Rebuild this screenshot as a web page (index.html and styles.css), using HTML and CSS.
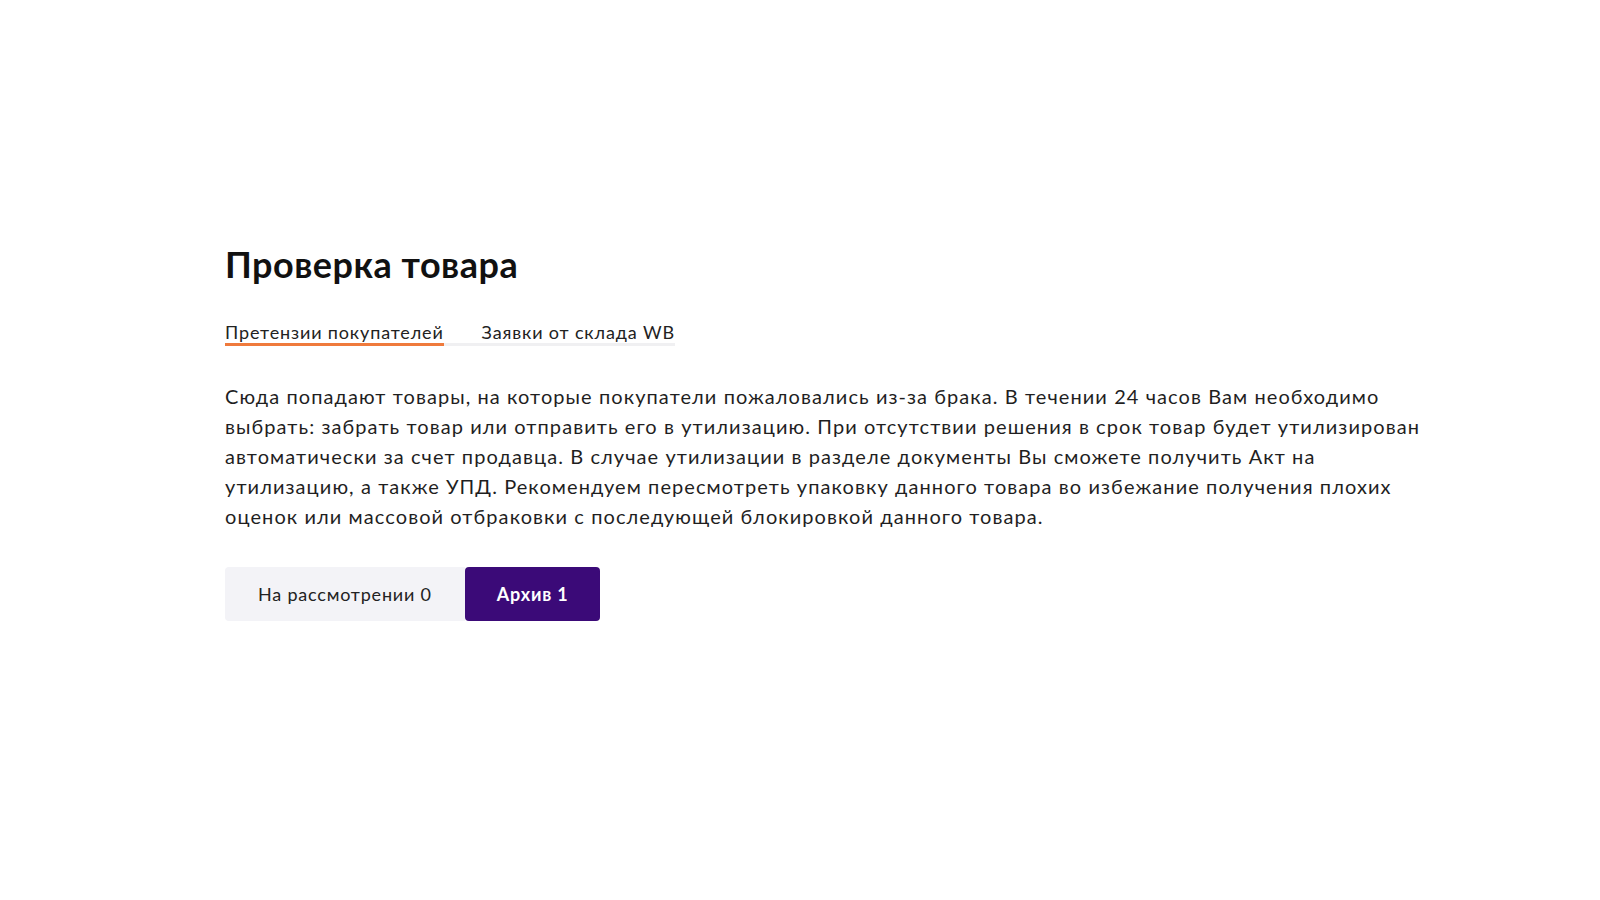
FILE: index.html
```html
<!DOCTYPE html>
<html lang="ru">
<head>
    <meta charset="UTF-8">
    <meta name="viewport" content="width=device-width, initial-scale=1.0">
    <title>Проверка товара</title>
    <link rel="stylesheet" href="styles.css">
</head>
<body>

    <div class="page">
        <h1 class="title">Проверка товара</h1>

        <!-- Tabs -->
        <div class="tabs">
            <span class="tab active">Претензии покупателей</span>
            <span class="tab">Заявки от склада WB</span>
        </div>

        <p class="description">Сюда попадают товары, на которые покупатели пожаловались из-за брака. В течении 24 часов Вам необходимо выбрать: забрать товар или отправить его в утилизацию. При отсутствии решения в срок товар будет утилизирован автоматически за счет продавца. В случае утилизации в разделе документы Вы сможете получить Акт на утилизацию, а также УПД. Рекомендуем пересмотреть упаковку данного товара во избежание получения плохих оценок или массовой отбраковки с последующей блокировкой данного товара.</p>

        <!-- Status switch -->
        <div class="switch">
            <button class="switch-btn">На рассмотрении 0</button>
            <button class="switch-btn selected">Архив 1</button>
        </div>
    </div>

</body>
</html>
```

FILE: styles.css
```css
/* Base */
body {
    font-family: Lato, "Open Sans", sans-serif;
    background-color: #ffffff;
    color: #1a1a1a;
    margin: 0;
    padding: 0;
}
.page {
    padding: 242px 0 0 225px;
    width: 1200px;
}
.title {
    font-size: 36px;
    font-weight: 700;
    letter-spacing: 0.5px;
    color: #111;
    margin: 0 0 35px;
}

/* Tabs */
.tabs {
    display: inline-flex;
    gap: 38px;
    border-bottom: 3px solid #f0f0f2;
}
.tab {
    font-size: 18px;
    letter-spacing: 0.85px;
    color: #222;
    margin-bottom: -3px;
    border-bottom: 3px solid transparent;
}
.tab.active {
    border-bottom-color: #ef7a3c;
}

/* Text */
.description {
    font-size: 20px;
    letter-spacing: 1.08px;
    line-height: 30px;
    color: #1f1f1f;
    margin: 35px 0 36px;
}

/* Switch */
.switch {
    display: flex;
}
.switch-btn {
    font-family: inherit;
    font-size: 18px;
    letter-spacing: 0.8px;
    height: 54px;
    padding: 0 33px;
    border: none;
    background-color: #f3f3f7;
    color: #222;
    border-radius: 4px 0 0 4px;
}
.switch-btn.selected {
    background-color: #3b0a78;
    color: #fff;
    font-weight: 700;
    padding: 0 32px;
    border-radius: 4px;
}
```
